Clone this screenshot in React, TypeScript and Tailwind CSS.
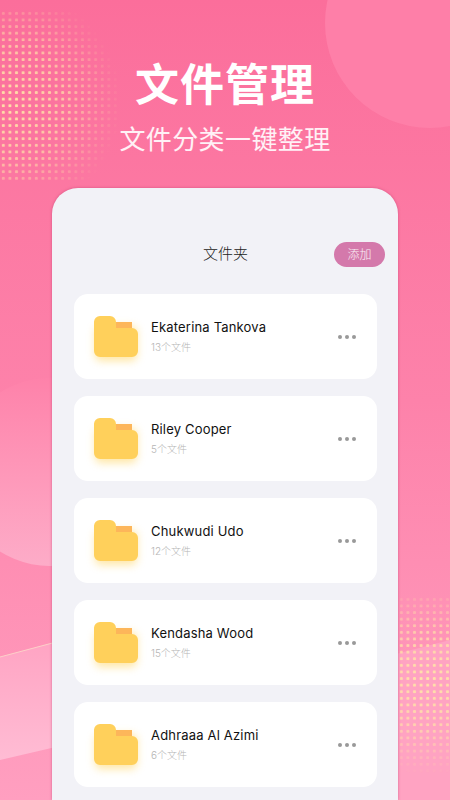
import React from "react";

const folders = [
  { name: "Ekaterina Tankova", count: "13个文件" },
  { name: "Riley Cooper", count: "5个文件" },
  { name: "Chukwudi Udo", count: "12个文件" },
  { name: "Kendasha Wood", count: "15个文件" },
  { name: "Adhraaa Al Azimi", count: "6个文件" },
];

const FolderIcon: React.FC = () => (
  <svg width="64" height="64" viewBox="0 0 64 64" className="shrink-0 -m-2.5 translate-y-px">
    <defs>
      <filter id="folderGlow" x="-30%" y="-30%" width="160%" height="170%">
        <feGaussianBlur stdDeviation="4" />
      </filter>
    </defs>
    <rect x="11" y="20" width="42" height="35" rx="6" fill="#ffd35c" opacity="0.55" filter="url(#folderGlow)" />
    <rect x="32" y="16" width="16" height="10" fill="#fdb65a" />
    <path
      d="M16 10h10a6 6 0 0 1 6 6v6h16a6 6 0 0 1 6 6v17a6 6 0 0 1-6 6H16a6 6 0 0 1-6-6V16a6 6 0 0 1 6-6z"
      fill="#ffd05b"
    />
  </svg>
);

const DotField: React.FC<{ id: string; cx: number; cy: number; r: number; w: number; h: number }> = ({ id, cx, cy, r, w, h }) => (
  <svg width={w} height={h} className="block">
    <defs>
      <pattern id={`${id}-p`} width="6.6" height="6.6" patternUnits="userSpaceOnUse">
        <rect x="1.8" y="1.8" width="3" height="3" rx="1.1" fill="#ffe3a8" />
      </pattern>
      <radialGradient id={`${id}-g`} gradientUnits="userSpaceOnUse" cx={cx} cy={cy} r={r}>
        <stop offset="0" stopColor="#fff" stopOpacity="1" />
        <stop offset="0.5" stopColor="#fff" stopOpacity="0.7" />
        <stop offset="1" stopColor="#fff" stopOpacity="0" />
      </radialGradient>
      <mask id={`${id}-m`}>
        <rect width={w} height={h} fill={`url(#${id}-g)`} />
      </mask>
    </defs>
    <rect width={w} height={h} fill={`url(#${id}-p)`} mask={`url(#${id}-m)`} />
  </svg>
);

const Background: React.FC = () => (
  <div className="absolute inset-0 bg-gradient-to-b from-[#fb6e9b] via-[#fd82aa] to-[#ff9fc0]">
    <div className="absolute left-[325px] top-[-82px] h-[210px] w-[210px] rounded-full bg-[#fe7fa8]" />
    <div className="absolute left-[-44px] top-[378px] h-[188px] w-[188px] rounded-full bg-gradient-to-b from-[#fe82aa] to-[#fdacc8]" />
    <svg width="450" height="800" className="absolute left-0 top-0">
      <defs>
        <linearGradient id="waveLeft" x1="0" y1="0" x2="0" y2="1">
          <stop offset="0" stopColor="#ffa4c3" />
          <stop offset="1" stopColor="#ffbcd4" />
        </linearGradient>
      </defs>
      <path d="M0 657L60 641V746L0 760z" fill="url(#waveLeft)" />
      <path d="M0 657L60 641" stroke="#fcd0c8" strokeWidth="1" fill="none" />
      <path d="M392 655L450 640V800H392z" fill="#ffa3c2" />
    </svg>
    <div className="absolute left-0 top-[10px]">
      <DotField id="dotsTop" cx={10} cy={92} r={112} w={118} h={170} />
    </div>
    <div className="absolute left-[398px] top-[596px]">
      <DotField id="dotsBottom" cx={30} cy={84} r={96} w={52} h={204} />
    </div>
  </div>
);

export default function App() {
  return (
    <div
      className="relative h-[800px] w-[450px] overflow-hidden"
      style={{ fontFamily: 'Inter, "Noto Sans CJK SC", sans-serif' }}
    >
      <Background />
      <div className="relative flex h-full flex-col items-center">
        <h1 className="mt-[57px] text-[44px] leading-[56px] font-bold tracking-[1px] text-white">文件管理</h1>
        <p className="mt-[9px] text-[26px] leading-[36px] font-normal tracking-[0.4px] text-white/90">文件分类一键整理</p>

        <div className="mt-[30px] flex w-[346px] flex-1 flex-col rounded-t-[26px] bg-[#f2f2f7] pl-[22px] pr-[21px] shadow-[0_0_3px_rgba(190,60,110,0.6)]">
          <div className="relative mt-[54px] flex h-[25px] items-center justify-center">
            <span className="text-[15px] font-light text-[#222222]">文件夹</span>
            <button className="absolute right-[-8px] h-[25px] w-[51px] rounded-full bg-[#d479ab] text-[12px] font-light text-white/90">
              添加
            </button>
          </div>
          <div className="mt-[27px] flex flex-col gap-[17px]">
            {folders.map((f) => (
              <div key={f.name} className="flex h-[85px] items-center rounded-[14px] bg-white pl-5 pr-[21px]">
                <FolderIcon />
                <div className="ml-[13px] flex flex-1 flex-col -mt-[2px]">
                  <span className="text-[13px] leading-[18px] font-normal tracking-[0.18px] text-[#111111]">{f.name}</span>
                  <span className="mt-[4px] text-[10px] leading-[14px] font-light text-[#b5b5b5]">{f.count}</span>
                </div>
                <div className="flex gap-[3px]">
                  <span className="h-1 w-1 rounded-full bg-[#999999]" />
                  <span className="h-1 w-1 rounded-full bg-[#999999]" />
                  <span className="h-1 w-1 rounded-full bg-[#999999]" />
                </div>
              </div>
            ))}
          </div>
        </div>
      </div>
    </div>
  );
}
